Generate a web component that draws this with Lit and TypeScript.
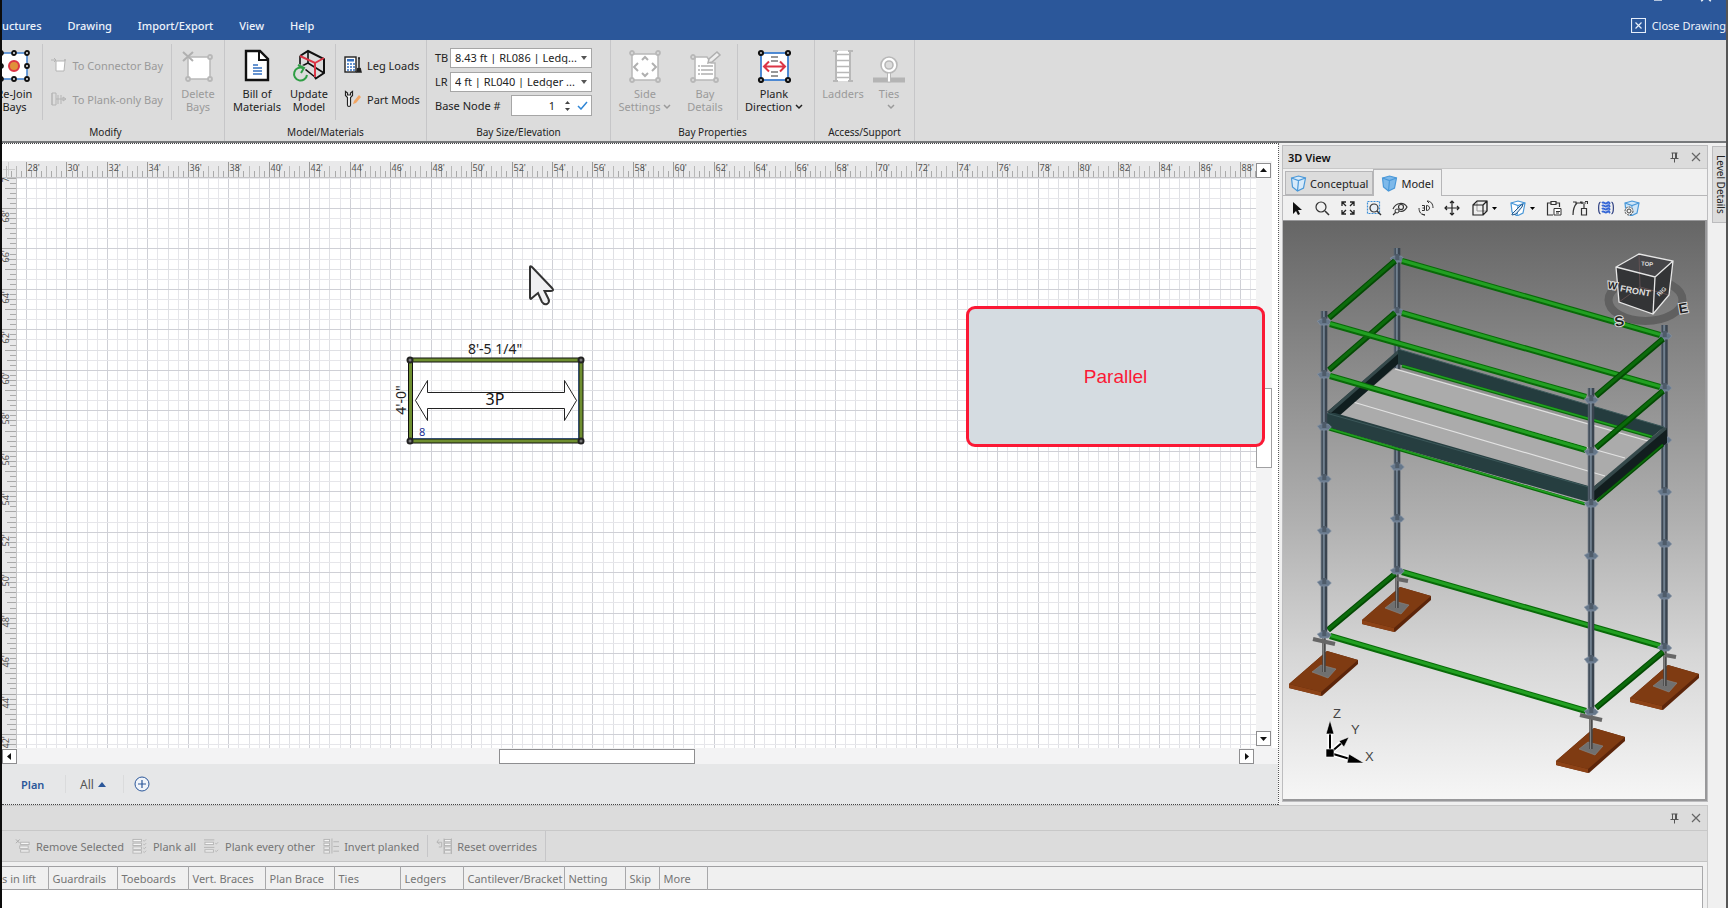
import { LitElement, html, svg, css } from "lit";
import { customElement, state } from "lit/decorators.js";

/* ---------- ribbon icons ---------- */
const node = (x: number, y: number, c = "#111") =>
  svg`<circle cx=${x} cy=${y} r="2" fill="#dcdcdc" stroke=${c} stroke-width="1.8"/>`;

const icons: Record<string, unknown> = {
  rejoin: html`<svg width="32" height="34" viewBox="0 0 32 34"><rect x="3" y="4" width="26" height="26" fill="#fff" stroke="#3d7fd0" stroke-width="1.5"/>
    ${[3, 16, 29].map((x) => [4, 17, 30].map((y) => node(x, y)))}
    <circle cx="16" cy="17" r="5" fill="#e0913a" stroke="#dc3545" stroke-width="2"/></svg>`,
  connector: html`<svg width="16" height="16" viewBox="0 0 16 16"><path d="M5 4h9l-1 10H5z" fill="#fff" stroke="#b4b4b4"/><path d="M0 3h5M3 1l2 2-2 2" fill="none" stroke="#b4b4b4"/><circle cx="14" cy="3" r="1" fill="#b4b4b4"/></svg>`,
  plankonly: html`<svg width="16" height="16" viewBox="0 0 16 16"><path d="M1 2h4v12H1zM1 2v12" fill="none" stroke="#b4b4b4"/><path d="M7 4v9M10 4v9M5 8h9M12 6l3 2-3 2z" fill="none" stroke="#b4b4b4"/></svg>`,
  del: html`<svg width="32" height="34" viewBox="0 0 32 34"><rect x="6" y="8" width="22" height="22" fill="#fff" stroke="#b8b8b8" stroke-width="1.5"/>
    ${node(28, 8, "#b8b8b8")}${node(28, 30, "#b8b8b8")}${node(6, 30, "#b8b8b8")}<path d="M1 3l10 9M11 3L1 12" stroke="#b0b0b0" stroke-width="2"/></svg>`,
  bom: html`<svg width="26" height="34" viewBox="0 0 26 34"><path d="M2 2h14l8 8v21H2z" fill="#fff" stroke="#111" stroke-width="2.4"/><path d="M15 2v9h9" fill="none" stroke="#111" stroke-width="2"/><path d="M9 16h5M9 19h9M9 22h9M9 25h9" stroke="#3470c0" stroke-width="1.6"/></svg>`,
  update: html`<svg width="34" height="34" viewBox="0 0 34 34"><path d="M8 7l8-5 16 8v14l-9 6" fill="none" stroke="#111" stroke-width="2"/><path d="M8 7v9l15 12M16 2v12l-8 4M16 14l16 10M23 14v15" fill="none" stroke="#111" stroke-width="1.6"/><path d="M8 7l15 7 9-5M23 14v14" fill="none" stroke="#dc3545" stroke-width="2"/>
    <path d="M11 19a6.500 6.500 0 1 0 4 7M6 17l6 2-3 6" fill="none" stroke="#dcdcdc" stroke-width="4"/><path d="M11 19a6.500 6.500 0 1 0 4 7M6 16l6 3-3 5" fill="none" stroke="#2f9e44" stroke-width="2"/></svg>`,
  legloads: html`<svg width="18" height="18" viewBox="0 0 18 18"><rect x="1" y="1" width="11" height="15" fill="#fff" stroke="#222" stroke-width="1.400"/><rect x="3" y="3" width="7" height="2.500" fill="#3470c0"/><path d="M3 8h2M6 8h2M9 8h2M3 11h2M6 11h2M9 11h2M3 14h2M6 14h2M9 14h2" stroke="#3470c0" stroke-width="1.600"/><path d="M15 2v10M14 2h2M14 12l-1 4h4l-1-4" stroke="#222" stroke-width="1.500" fill="#222"/></svg>`,
  partmods: html`<svg width="18" height="18" viewBox="0 0 18 18"><path d="M1.500 1.500v4l2 2v7.500a1.500 1.500 0 0 0 3 0V7.500l2-2v-4L6.500 3v2h-3V3z" fill="#fff" stroke="#222" stroke-width="1.200"/><path d="M9 14l1-3 5-6 2 2-5 6z" fill="#f3a562"/></svg>`,
  side: html`<svg width="34" height="34" viewBox="0 0 34 34"><rect x="4" y="5" width="26" height="26" fill="#fff" stroke="#b8b8b8" stroke-width="1.500"/>${[4, 30].map((x) => [4, 31].map((y) => node(x, y, "#b8b8b8")))}
    <path d="M14 11l3-3 3 3M14 24l3 3 3-3M10 14l-4 4 4 4M24 14l4 4-4 4" fill="none" stroke="#b0b0b0" stroke-width="2"/></svg>`,
  details: html`<svg width="34" height="34" viewBox="0 0 34 34"><path d="M7 8h12l4 6h4v17H7z" fill="#fff" stroke="#b8b8b8" stroke-width="1.500"/>${node(5, 8, "#b8b8b8")}${node(5, 31, "#b8b8b8")}${node(28, 31, "#b8b8b8")}
    <path d="M10 17h2M10 21h2M10 25h2M13 17h12M13 21h12M13 25h12" stroke="#b0b0b0" stroke-width="1.600"/><path d="M20 14l1-4 8-7 3 3-8 7z" fill="#eee" stroke="#b0b0b0" stroke-width="1.500"/></svg>`,
  plankdir: html`<svg width="34" height="34" viewBox="0 0 34 34"><rect x="4" y="4" width="27" height="27" fill="#fff" stroke="#3d7fd0" stroke-width="1.800"/>${[4, 31].map((x) => [4, 31].map((y) => svg`<circle cx=${x} cy=${y} r="2" fill="#ddd" stroke="#111" stroke-width="2.200"/>`))}
    <path d="M14 8h7M14 12h7M14 23h7M14 27h7" stroke="#777" stroke-width="1.400"/><path d="M7 17.500h21M12 12.500l-5 5 5 5M23 12.500l5 5-5 5" fill="none" stroke="#dc3545" stroke-width="2"/></svg>`,
  ladders: html`<svg width="24" height="34" viewBox="0 0 24 34"><path d="M5 2h14v30H5z" fill="#fff"/><path d="M2 2h5M17 2h5M2 32h5M17 32h5M5 2v30M19 2v30" fill="none" stroke="#b8b8b8" stroke-width="2"/><path d="M5 5.500h14M5 11.500h14M5 17.500h14M5 23.500h14M5 28.500h14" stroke="#b8b8b8" stroke-width="1.600"/></svg>`,
  ties: html`<svg width="34" height="34" viewBox="0 0 34 34"><path d="M1 28.500h32v5H1z" fill="#b4b4b4"/><circle cx="17" cy="16" r="8" fill="#fff" stroke="#b8b8b8" stroke-width="1.600"/><circle cx="17" cy="16" r="4" fill="#dcdcdc" stroke="#b8b8b8" stroke-width="1.600"/><path d="M15.500 24h3v9h-3z" fill="#fff" stroke="#b8b8b8"/></svg>`,
};

const chev = html`<svg class="chev" width="8" height="6" viewBox="0 0 8 6"><path d="M1 1l3 3 3-3" fill="none" stroke="currentColor" stroke-width="1.500"/></svg>`;
const pin = html`<svg width="9" height="11" viewBox="0 0 9 11"><path d="M1.500 1h6M2.500 1v5M5.500 1v5M6.500 1v5M0.500 6.500h8M4.500 6.500v4" fill="none" stroke="#555" /></svg>`;
const cross = html`<svg width="10" height="10" viewBox="0 0 10 10"><path d="M1 1l8 8M9 1L1 9" stroke="#666" stroke-width="1.200"/></svg>`;

/* ---------- lift toolbar icons ---------- */
const lines = (x: number, w: number, ys: number[]) => ys.map((y) => svg`<rect x=${x} y=${y} width=${w} height="2.500" fill="#f6f6f6" stroke="#b4b4b4"/>`);
const liftIcons = [
  html`<svg width="16" height="16" viewBox="0 0 17 16"><path d="M1 1l4 4M5 1L1 5" stroke="#aaa"/>${lines(6, 9, [4, 12])}${lines(5, 9, [8])}</svg>`,
  html`<svg width="16" height="16" viewBox="0 0 17 16">${lines(1, 9, [1, 5, 9, 13])}<path d="M12 2l1 1 2-2M12 6l1 1 2-2M12 10l1 1 2-2M12 14l1 1 2-2" fill="none" stroke="#b4b4b4"/></svg>`,
  html`<svg width="16" height="16" viewBox="0 0 17 16">${lines(1, 9, [4, 12])}<path d="M0 1.500h11M0 9.500h11M12 5l1 1 2-2M12 13l1 1 2-2" fill="none" stroke="#b4b4b4"/></svg>`,
  html`<svg width="16" height="16" viewBox="0 0 17 16">${lines(1, 6, [1, 5, 9, 13])}<path d="M9.500 0v16M11 3.500h6M11 8.500h6M11 13.500h6" stroke="#b4b4b4"/></svg>`,
  html`<svg width="16" height="17" viewBox="0 0 17 17">${lines(9, 7, [1, 5, 9, 13])}<path d="M8.500 0v16.500M16.500 0v16.500M3 1L1 4l3 2M1 4h5v5H3" fill="none" stroke="#b4b4b4"/></svg>`,
];

/* ---------- 3D toolbar icons ---------- */
const cube = (fill: string) => svg`<path d="M1 3l7-2 7 2-2 10-6 3-5-4z" fill=${fill} stroke="#4a98d8" stroke-width="1.200"/><path d="M1 3l7 2.500L15 3M8 5.500L7 16" fill="none" stroke="#4a98d8" stroke-width="1.200"/>`;
const viewIcons: { label: string; drop?: boolean; art: unknown }[] = [
  { label: "Select", art: svg`<path d="M5 2v12l3-3 2 4 2-1-2-4h4z" fill="#111"/>` },
  { label: "Zoom", art: svg`<circle cx="7" cy="7" r="5" fill="none" stroke="#333" stroke-width="1.200"/><path d="M11 11l4 4" stroke="#333" stroke-width="1.600"/>` },
  { label: "Zoom extents", art: svg`<path d="M2 6V2h4M10 2h4v4M14 10v4h-4M6 14H2v-4M2 2l4 4M14 2l-4 4M14 14l-4-4M2 14l4-4" fill="none" stroke="#222" stroke-width="1.300"/>` },
  { label: "Zoom window", art: svg`<rect x="1.500" y="1.500" width="12" height="12" fill="none" stroke="#3d8fd8" stroke-width="1.200" stroke-dasharray="2 1"/><circle cx="8" cy="8" r="4" fill="#e8eef4" stroke="#333" stroke-width="1.200"/><path d="M11 11l4 4" stroke="#333" stroke-width="1.400"/>` },
  { label: "Look around", art: svg`<path d="M1 9c3-7 11-7 14-2-2 4-5 5-8 4" fill="none" stroke="#333" stroke-width="1.200"/><circle cx="9" cy="7" r="2.500" fill="none" stroke="#333" stroke-width="1.200"/><circle cx="5" cy="11" r="2" fill="#f0f0f0" stroke="#333"/><path d="M4 12l-3 3" stroke="#333" stroke-width="1.200"/>` },
  { label: "Orbit", art: svg`<path d="M4 5.500h2.500v5H4M4.500 8h2M8.500 5.500v5c4 0 4-5 0-5z" fill="none" stroke="#333"/><path d="M9 1c4 0 6 3 6 7M7 15c-4 0-6-3-6-7M9 1l2 2M7 15l-3-1" fill="none" stroke="#333"/>` },
  { label: "Pan", art: svg`<path d="M8 1v14M1 8h14M6 3l2-2 2 2M6 13l2 2 2-2M3 6L1 8l2 2M13 6l2 2-2 2" fill="none" stroke="#222" stroke-width="1.200"/>` },
  { label: "View direction", drop: true, art: svg`<path d="M5 1h10v10H5z" fill="none" stroke="#999"/><path d="M1 5h10v10H1zM1 5l4-4h10v10l-4 4M11 5l4-4" fill="none" stroke="#222" stroke-width="1.200"/>` },
  { label: "Visual style", drop: true, art: svg`${cube("#fff")}<path d="M2 14l9-9 2-1-1 3-6 7-4 1z" fill="#dbeaf7" stroke="#23598c"/>` },
  { label: "Paste view", art: svg`<path d="M5 3H1.500v12H7M10 3h3.500v4M5 1.500h5v3H5z" fill="none" stroke="#333" stroke-width="1.200"/><path d="M8 8.500h7v6.500H8zM10 11.500h4M10 13h3" fill="#fff" stroke="#333"/>` },
  { label: "Edit path", art: svg`<path d="M1 15c0-6 2-10 4-12h9M1 2h3v3M8 2h2v2M13 1.500h2.500V4M9.500 8.500h5V15h-5zM12 4v4" fill="none" stroke="#333" stroke-width="1.200"/>` },
  { label: "Hatch", art: svg`<path d="M2.500 2C0 3 0 13 2.500 14M13.500 2C16 3 16 13 13.500 14" fill="none" stroke="#2d3f80" stroke-width="1.200"/><path d="M4 3c2-2 3 2 5 0s2 0 3 1M4 6c2-2 3 2 5 0s2 0 3 1M4 9c2-2 3 2 5 0s2 0 3 1M4 12c2-2 3 2 5 0s2 0 3 1" fill="none" stroke="#3567d6" stroke-width="2"/>` },
  { label: "Model settings", art: svg`${cube("#cfe6f8")}<circle cx="5" cy="11" r="4" fill="#f0f0f0" stroke="#444" stroke-dasharray="2 1"/><circle cx="5" cy="11" r="2" fill="none" stroke="#444"/>` },
];

/* ---------- plan geometry ---------- */
const FT = 20.23;
const X28 = 26;
const Y68 = 208;
const range = (from: number, to: number) => Array.from({ length: Math.max(0, to - from + 1) }, (_, i) => from + i);
const xAt = (ft: number) => Math.round(X28 + ft * FT) + 0.5;
const yAt = (ft: number) => Math.round(Y68 + ft * FT) + 0.5;

const rulerTop = (feet: number[]) => svg`<g transform="translate(-2 -161)">
  <path d="M8.500 162v14M3 169.500h12" stroke="#ccc"/>
  ${feet.map((f) => svg`
    <path d=${`M${xAt(f)} ${f % 2 ? 166 : 162}V177M${xAt(f + 0.5)} 166V177`} stroke=${f % 2 ? "#b8b8b8" : "#9a9a9a"}/>
    <path d=${`M${xAt(f + 0.25)} 171V177M${xAt(f + 0.75)} 171V177`} stroke="#aaa"/>
    ${f % 2 === 0 ? svg`<text x=${xAt(f) + 1} y="171" class="tick">${28 + f}'</text>` : null}`)}
</g>`;

const rulerLeft = (feet: number[]) => svg`<g transform="translate(-2 -178)">
  ${feet.map((f) => svg`
    <path d=${`M${f % 2 ? 5 : 2} ${yAt(f)}H16M7 ${yAt(f + 0.5)}H16`} stroke="#a8a8a8"/>
    <path d=${`M10 ${yAt(f + 0.25)}H16M10 ${yAt(f + 0.75)}H16`} stroke="#aaa"/>
    ${f % 2 === 0 ? svg`<text transform=${`translate(9 ${yAt(f) + 14}) rotate(-90)`} class="tick">${68 - f}'</text>` : null}`)}
</g>`;

const grid = (fx: number[], fy: number[]) => svg`
  ${fx.map((f) => svg`<path d=${`M${xAt(f)} 178V2000`} stroke=${f % 2 ? "#dfe0e4" : "#cfd0d6"}/><path d=${`M${xAt(f + 0.5)} 178V2000`} stroke="#e6e6ea"/>`)}
  ${fy.map((f) => svg`<path d=${`M17 ${yAt(f)}H4000`} stroke=${f % 2 ? "#dfe0e4" : "#cfd0d6"}/><path d=${`M17 ${yAt(f + 0.5)}H4000`} stroke="#e6e6ea"/>`)}`;

const bay = () => svg`
  <path d="M410 360H581V441H410z" fill="#fff" fill-opacity=".35"/>
  <path d="M578.500 363V438.500H413" fill="none" stroke="#5b8fd6"/>
  <path d="M410.500 360V441M581 360V441M410 360H581M410 441H581" stroke="#111" stroke-width="5"/>
  <path d="M410.500 360V441M581 360V441M410 360H581M410 441H581" stroke="#6f8f30" stroke-width="3"/>
  ${[410, 581].map((x) => [360, 441].map((y) => svg`<circle cx=${x} cy=${y} r="3.500" fill="#222"/><circle cx=${x} cy=${y} r="1.500" fill="#777"/>`))}
  <path d="M415.500 400.500L427.500 380.500V392.500H564.500V380.500L576.500 400.500L564.500 420.500V408.500H427.500V420.500z" fill="#fff" stroke="#222"/>
  <text x="495" y="354" text-anchor="middle" class="dim">8'-5 1/4"</text>
  <text transform="translate(406 400) rotate(-90)" text-anchor="middle" class="dim">4'-0"</text>
  <text x="495" y="405" text-anchor="middle" class="plank">3P</text>
  <text x="419" y="436" class="level">8</text>
  <path d="M530 267V297.500Q530 300 532 298L538 293L542 302Q544 305 547 304Q550 302 548.500 299L544.500 291H551Q554.500 291 552 288L532 267Q530 265.500 530 267z" fill="#f0f0f2" stroke="#333" stroke-width="2"/>`;

/* ---------- 3D scene geometry ---------- */
const beam = (x1: number, y1: number, x2: number, y2: number, side = false, w = 6) => svg`
  <path d=${`M${x1} ${y1}L${x2} ${y2}`} stroke=${side ? "#034a03" : "#086a08"} stroke-width=${w}/>
  <path d=${`M${x1} ${y1 - 0.5}L${x2} ${y2 - 0.5}`} stroke=${side ? "#0b6b0b" : "#22a022"} stroke-width=${w / 2}/>`;

const post = (x: number, top: number, bottom: number, discs: number[]) => svg`
  <rect x=${x - 3} y=${top} width="6" height=${bottom - top} fill="#3a444f"/>
  <rect x=${x - 1.5} y=${top} width="2" height=${bottom - top} fill="#71808f"/>
  <path d=${`M${x - 3} ${top}V${bottom}`} stroke="#56626e"/>
  ${discs.map((y) => svg`<path d=${`M${x - 7} ${y - 1}L${x - 3} ${y - 3}H${x + 4}L${x + 7} ${y}L${x + 4} ${y + 3}H${x - 4}z`} fill="#66778a" stroke="#8594a6" stroke-width=".7"/><rect x=${x - 2} y=${y - 5} width="4" height="6" fill="#4e5b69"/>`)}`;

const foot = (x: number, y: number, top: number, behind = false) => svg`
  <path d=${`M${x + 3} ${y - 21}L${x + 34} ${y - 12}V${y - 8}L${x - 2} ${y + 24}L${x - 35} ${y + 16}V${y + 12}z`} fill="#5c250a"/>
  <path d=${`M${x + 3} ${y - 21}L${x + 34} ${y - 12}L${x - 3} ${y + 20}L${x - 35} ${y + 12}z`} fill="#7f3b12"/>
  <path d=${`M${x - 35} ${y + 12}L${x - 3} ${y + 20}V${y + 24}L${x - 35} ${y + 16}z`} fill="#8c4216"/>
  <path d=${`M${x - 12} ${y}L${x - 3} ${y - 7}L${x + 12} ${y - 3}L${x + 4} ${y + 6}z`} fill="#707070" stroke="#888" stroke-width=".6"/>
  <path d=${`M${x} ${y}V${top}`} stroke="#444" stroke-width="3.400"/><path d=${`M${x - 0.4} ${y}V${top}`} stroke="#888"/>
  <path d=${`M${behind ? x : x - 11} ${behind ? top + 5 : top + 2}L${x + 11} ${top + 7}`} stroke="#666" stroke-width="4"/>`;

const scene = () => svg`
  ${foot(1397, 608, 574, true)}${foot(1665, 686, 650, true)}${foot(1324, 672, 637)}
  ${beam(1402, 572, 1660, 646)}${beam(1395, 574, 1328, 630, true)}
  ${post(1397.300, 248, 574, [259, 312, 467, 519, 571])}
  ${post(1664.700, 325, 650, [336, 388, 440, 492, 544, 596, 648])}
  ${beam(1402, 261, 1660, 335)}${beam(1402, 313, 1660, 387)}
  ${beam(1395, 261, 1329, 318, true)}${beam(1395, 313, 1329, 370, true)}
  <path d="M1395 368L1648 440L1592 489L1336 417z" fill="#ababab"/>
  <path d="M1395 369L1648 441M1353 402L1605 476M1373 388L1625 458" stroke="#e2e2e2" stroke-width="1.200"/>
  <path d="M1398 349L1664 427L1652 437L1398 364z" fill="#243c3e"/>
  <path d="M1398 349L1664 427" stroke="#3c585a"/>
  ${beam(1402, 366, 1652, 437, false, 3)}
  <path d="M1327 412L1398 351V364L1338 417z" fill="#101e1f"/><path d="M1327 412L1398 350V354L1331 413z" fill="#35494b"/>
  <path d="M1592 488L1667 428V443L1592 503z" fill="#121e1f"/><path d="M1592 488L1664 427L1667 429L1594 491z" fill="#35494b"/>
  <path d="M1326 413L1335 413L1592 487V503L1326 427z" fill="#263e40"/><path d="M1326 413L1592 488" stroke="#3c585a"/>
  ${beam(1329, 429, 1585, 504, false, 3)}${beam(1663, 445, 1597, 501, true, 3)}
  ${beam(1663, 652, 1596, 708, true)}
  ${beam(1330, 636, 1586, 711)}
  ${foot(1591, 749, 713)}
  ${post(1324.300, 311, 638, [322, 375, 427, 479, 531, 583, 635])}
  ${beam(1330, 324, 1586, 397)}${beam(1330, 376, 1586, 450)}
  ${beam(1663, 339, 1596, 396, true)}${beam(1663, 391, 1596, 448, true)}
  ${post(1591.300, 388, 713, [400, 452, 504, 556, 608, 660, 712])}
  <ellipse cx="1645.500" cy="300" rx="37" ry="21" fill="none" stroke="#606060" stroke-width="8"/>
  <path d="M1616 267L1639 254L1673 261L1669 295L1653 314L1619 302z" fill="#333436"/>
  <path d="M1616 267L1639 254L1673 261L1655 277z" fill="#454548"/>
  <path d="M1639 254L1640 287M1640 287L1619 302M1640 287L1669 295" stroke="#6b5557" stroke-width=".8"/>
  <path d="M1616 267L1639 254L1673 261L1669 295L1653 314L1619 302zM1616 267L1655 277L1673 261M1655 277L1653 314" fill="none" stroke="#e6e6e6" stroke-width="1.300"/>
  <text class="face" transform="translate(1635 294) rotate(10)" text-anchor="middle">FRONT</text>
  <text class="face small" transform="translate(1647 266) rotate(4)" text-anchor="middle">TOP</text>
  <text class="face small" transform="translate(1663 293) rotate(-45)" text-anchor="middle">RIG</text>
  <text class="compass" transform="translate(1620 326) rotate(-10)" text-anchor="middle">S</text>
  <text class="compass" transform="translate(1684 313) rotate(-10)" text-anchor="middle">E</text>
  <text class="compass small" transform="translate(1612 289) rotate(10)" text-anchor="middle">W</text>
  <path d="M1330 753V730M1330 753L1342 742M1330 753L1350 759" stroke="#fff" stroke-width="5"/>
  <path d="M1330 753V730M1330 753L1344 741M1330 753L1350 759" stroke="#000" stroke-width="2"/>
  <path d="M1326 749h8v8h-8zM1330 720L1334 734H1326zM1349 754L1364 763L1347 763zM1349 737L1344 747L1339 741z" stroke="#fff" stroke-width=".6"/>
  <g class="axis"><text x="1333" y="718">Z</text><text x="1351" y="734">Y</text><text x="1365" y="761">X</text></g>`;

@customElement("app-root")
export class AppRoot extends LitElement {
  static styles = css`
    :host { display: block; font: 11px/13px "Noto Sans", "Open Sans", sans-serif; color: #222; }
    * { box-sizing: border-box; }
    button { font: inherit; color: inherit; background: none; border: 0; padding: 0; margin: 0; }
    svg { display: block; flex: none; }
    .app { display: flex; flex-direction: column; height: 100vh; min-height: 600px; overflow: hidden; background: #f0f0f0; border-left: 2px solid #0c0c0c; border-right: 2px solid #555; }
    .title { flex: none; height: 40px; background: #2b579a; color: #eef3fa; display: flex; align-items: flex-end; justify-content: space-between; position: relative; overflow: hidden; }
    .title button { height: 29px; white-space: nowrap; }
    .menu { display: flex; gap: 26px; font-weight: 500; }
    .closer { display: flex; align-items: center; gap: 6px; }
    .caption { position: absolute; right: 14px; top: 0; }

    .ribbon { flex: none; height: 103px; display: flex; background: #dcdcdc; border-bottom: 2px solid #77797b; overflow: hidden; }
    .group { display: flex; flex-direction: column; flex: none; border-right: 1px solid #c6c6c8; }
    .body { flex: 1; display: flex; padding-top: 4px; }
    .caption-text { text-align: center; font-size: 10px; line-height: 18px; height: 18px; color: #222; }
    .g1 { width: 238px; margin-left: -15px; } .g1 .body { justify-content: flex-end; }
    .g2 { width: 202px; } .g3 { width: 184px; } .g4 { width: 204px; } .g5 { width: 100px; }
    .g2 .rule, .g4 .rule { margin-left: 6px; }
    .big { display: flex; flex-direction: column; align-items: center; gap: 4px; padding-top: 5px; flex: none; white-space: nowrap; text-align: center; }
    .off { color: #9a9a9a; }
    .w36 { width: 36px; } .w40 { width: 40px; } .w52 { width: 52px; } .w56 { width: 56px; } .w64 { width: 64px; } .w68 { width: 68px; } .w72 { width: 72px; }
    .big .chev { display: inline-block; margin-left: 3px; vertical-align: 1px; }
    .rule { flex: none; width: 1px; height: 76px; background: #c6c6c8; }
    .pair { display: flex; flex-direction: column; gap: 16px; padding: 12px 8px 0; white-space: nowrap; }
    .pair button { display: flex; align-items: center; gap: 5px; height: 18px; }
    .sizes { display: flex; flex-direction: column; gap: 3px; padding: 3px 18px 0 8px; flex: 1; }
    .sizes .row { display: flex; align-items: center; height: 21px; white-space: nowrap; }
    .sizes .row label { flex: 1; }
    .combo { position: relative; width: 142px; height: 20px; }
    .combo select, .num { appearance: none; width: 100%; height: 100%; border: 1px solid #a6a6a6; border-radius: 0; background: #fff; font: inherit; color: #222; padding: 0 4px; margin: 0; }
    .combo svg { position: absolute; right: 5px; top: 8px; pointer-events: none; }
    .numbox { display: flex; align-items: center; width: 81px; height: 21px; border: 1px solid #a6a6a6; background: #fff; padding-right: 3px; gap: 7px; }
    .numbox .num { flex: 1; min-width: 0; border: 0; text-align: right; padding: 0; margin-right: 3px; appearance: textfield; }
    .num::-webkit-inner-spin-button { appearance: none; }
    .spin { display: flex; flex-direction: column; gap: 4px; }

    .work { flex: 1; min-height: 0; display: flex; }
    .plan { flex: 1; min-width: 0; display: flex; flex-direction: column; position: relative; border-right: 1px dotted #555; background: #fff; border-top: 1px dotted #444; }
    .gap { flex: none; height: 17px; }
    .board { flex: 1; min-height: 0; display: grid; grid-template-columns: 15px 1fr 22px; grid-template-rows: 17px 1fr 16px; }
    .rtop { grid-column: 1 / 3; background: #e9e9ea; border-bottom: 1px solid #c4c4c6; }
    .rleft { background: #e9e9ea; border-right: 1px solid #c4c4c6; }
    .board svg.fill { width: 100%; height: 100%; overflow: hidden; }
    .cell { overflow: hidden; min-width: 0; min-height: 0; }
    .vbar { grid-column: 3; grid-row: 1 / 3; display: flex; flex-direction: column; width: 16px; background: #f3f3f4; padding: 2px 0; }
    .hbar { grid-column: 1 / 4; display: flex; background: #f3f3f4; padding: 1px 24px 0 0; height: 16px; }
    .hbar button, .vbar button { display: grid; place-items: center; background: #fff; border: 1px solid #8e8e90; width: 15px; height: 15px; flex: none; }
    .track { flex: 1; display: flex; }
    .vbar .track { flex-direction: column; }
    .hbar .track::before { content: ""; flex: 483; } .hbar .track::after { content: ""; flex: 545; }
    .vbar .track::before { content: ""; flex: 211; } .vbar .track::after { content: ""; flex: 264; }
    .hthumb { flex: 194; border: 1px solid #8e8e90; background: #fff; height: 15px; }
    .vthumb { flex: 78; border: 1px solid #a0a0a2; background: #fff; width: 16px; }
    .tick { font-size: 9px; fill: #555; }
    .dim { font-size: 14px; fill: #222; } .plank { font-size: 16px; fill: #111; } .level { font-size: 11px; fill: #1b2f96; }
    .callout { position: absolute; right: 13px; top: 162px; width: 299px; height: 141px; border: 3px solid #fb1935; border-radius: 9px; background: #d5dce1; display: grid; place-items: center; font: 19px/22px "Liberation Sans", sans-serif; color: #fb1935; }
    .sheets { flex: none; height: 41px; background: #e6e7e8; display: flex; align-items: center; border-bottom: 1px dotted #444; padding-left: 19px; }
    .sheets button { display: flex; align-items: center; gap: 4px; height: 18px; }
    .sheets .plan-tab { color: #2b579a; font-weight: 600; width: 45px; border-right: 1px solid #dadbdc; }
    .sheets .all { width: 58px; padding-left: 14px; border-right: 1px solid #dadbdc; color: #555; font-size: 12px; }
    .sheets .add { margin-left: 10px; }

    .view { flex: none; width: 426px; margin: 2px 0 3px 3px; border: 1px solid #bdbdbf; display: flex; flex-direction: column; background: #f0f0f0; }
    .bar { flex: none; display: flex; align-items: center; justify-content: flex-end; gap: 12px; padding-right: 6px; height: 23px; background: #dcdcdc; border-bottom: 1px solid #c8c8c8; }
    .lift .bar { height: 25px; }
    .bar h2 { flex: 1; margin: 0; padding-left: 5px; font-size: 11px; font-weight: 600; color: #111; }
    .tabs { flex: none; height: 27px; display: flex; align-items: flex-end; padding-left: 2px; border-bottom: 1px solid #b6b6b8; }
    .tabs button { display: flex; align-items: center; border: 1px solid #b6b6b8; height: 24px; background: #dcdcdc; padding: 0 4px; gap: 3px; white-space: nowrap; }
    .tabs button.on { height: 27px; margin-bottom: -1px; background: #f0f0f0; border-bottom: 0; padding: 0 7px; }
    .tools { flex: none; height: 24px; display: flex; align-items: center; }
    .tools button { width: 26px; height: 24px; display: flex; align-items: center; justify-content: center; gap: 4px; }
    .tools button.drop { width: 38px; }
    .stage { flex: 1; min-height: 0; border: solid #98989a; border-width: 1px 2px 2px 0; background: linear-gradient(#666, #b0b0b0 52%, #d6d6d6 75%, #f6f6f6); }
    .stage svg { width: 100%; height: 100%; }
    .face { font: 700 9px "Liberation Sans", sans-serif; fill: #ddd; } .face.small { font-size: 6px; }
    .compass { font: 700 14px "Liberation Sans", sans-serif; fill: #222; stroke: #ddd; stroke-width: 2px; paint-order: stroke; } .compass.small { font-size: 10px; }
    .axis { font: 13px "Liberation Sans", sans-serif; fill: #444; }
    .side { flex: none; width: 18px; padding: 3px 0 0 4px; overflow: hidden; }
    .side button { writing-mode: vertical-rl; height: 77px; width: 18px; line-height: 16px; background: #dcdcdc; border: 1px solid #bcbcbe; font-size: 10px; white-space: nowrap; }

    .lift { flex: none; height: 103px; display: flex; flex-direction: column; margin-right: 18px; border: solid #c8c8c8; border-width: 1px 1px 0 0; background: #f0f0f0; }
    .lift-tools { flex: none; height: 31px; background: #dcdcdc; border-bottom: 1px solid #c4c4c4; display: flex; align-items: center; padding-left: 13px; gap: 8px; color: #757575; }
    .lift-tools button { display: flex; align-items: center; gap: 5px; white-space: nowrap; }
    .lift-tools .rule { height: 22px; } .lift-tools .end { height: 31px; }
    .sheet { flex: 1; margin: 4px 4px 0 0; background: #fff; border-right: 1px solid #a8a8aa; overflow: hidden; }
    table { width: 100%; border-collapse: collapse; table-layout: fixed; border: solid #a0a0a2; border-width: 1px 0; }
    th { height: 23px; padding: 0 0 0 4px; text-align: left; font-weight: 400; background: #f0f0f0; border-right: 1px solid #a8a8aa; color: #757575; white-space: nowrap; overflow: hidden; }
    th:first-child { padding: 0; } th:last-child { border-right: 0; }
    .c46 { width: 46px; } .c69 { width: 69px; } .c71 { width: 71px; } .c77 { width: 77px; } .c66 { width: 66px; } .c63 { width: 63px; } .c101 { width: 101px; } .c61 { width: 61px; } .c34 { width: 34px; } .c48 { width: 48px; }
  `;

  @state() private winW = window.innerWidth;
  @state() private winH = window.innerHeight;

  private onResize = () => {
    this.winW = window.innerWidth;
    this.winH = window.innerHeight;
  };

  connectedCallback() {
    super.connectedCallback();
    window.addEventListener("resize", this.onResize);
  }

  disconnectedCallback() {
    window.removeEventListener("resize", this.onResize);
    super.disconnectedCallback();
  }

  private big(icon: string, a: string, b: string, w: string, off = false, drop = false) {
    return html`<button class="big ${w} ${off ? "off" : ""}">${icons[icon]}<span>${a}<br />${b}${drop ? chev : null}</span></button>`;
  }

  private small(icon: string, text: string, off = false) {
    return html`<button class=${off ? "off" : ""}>${icons[icon]}${text}</button>`;
  }

  private combo(id: string, label: string, value: string) {
    return html`<div class="row"><label for=${id}>${label}</label><span class="combo"><select id=${id}><option>${value}</option></select>
      <svg width="6" height="4" viewBox="0 0 6 4"><path d="M0 0h6L3 4z" fill="#555" /></svg></span></div>`;
  }

  private arrow(d: string) {
    return html`<svg width="7" height="7" viewBox="0 0 7 7"><path d=${d} fill="#111" /></svg>`;
  }

  render() {
    const fx = range(-1, Math.floor((this.winW - 472 - X28) / FT));
    const fy = range(-2, Math.floor((this.winH - 162 - Y68) / FT));
    const cols: [string, string][] = [["s in lift", "c46"], ["Guardrails", "c69"], ["Toeboards", "c71"], ["Vert. Braces", "c77"], ["Plan Brace", "c69"], ["Ties", "c66"], ["Ledgers", "c63"], ["Cantilever/Bracket", "c101"], ["Netting", "c61"], ["Skip", "c34"], ["More", "c48"], ["", ""]];
    return html`<div class="app">
      <header class="title">
        <nav class="menu">${["uctures", "Drawing", "Import/Export", "View", "Help"].map((t) => html`<button>${t}</button>`)}</nav>
        <svg class="caption" width="60" height="2" viewBox="0 0 60 2"><path d="M2 0h8M51 0l-2 1M57 0l2 1" stroke="#dfe7f2" stroke-width="1.500"/></svg>
        <button class="closer"><svg width="15" height="15" viewBox="0 0 15 15"><path d="M.5.500h14v14H.5zM4.500 4.500l6 6M10.500 4.500l-6 6" fill="none" stroke="#e6eefa" stroke-width="1.200"/></svg>Close Drawing</button>
      </header>

      <section class="ribbon">
        <div class="group g1"><div class="body">
          ${this.big("rejoin", "Re-Join", "Bays", "w56")}<i class="rule"></i>
          <div class="pair">${this.small("connector", "To Connector Bay", true)}${this.small("plankonly", "To Plank-only Bay", true)}</div>
          <i class="rule"></i>${this.big("del", "Delete", "Bays", "w52", true)}
        </div><div class="caption-text">Modify</div></div>
        <div class="group g2"><div class="body">
          ${this.big("bom", "Bill of", "Materials", "w64")}${this.big("update", "Update", "Model", "w40")}<i class="rule"></i>
          <div class="pair">${this.small("legloads", "Leg Loads")}${this.small("partmods", "Part Mods")}</div>
        </div><div class="caption-text">Model/Materials</div></div>
        <div class="group g3"><div class="body"><div class="sizes">
          ${this.combo("tb", "TB", "8.43 ft | RL086 | Ledg...")}${this.combo("lr", "LR", "4 ft | RL040 | Ledger ...")}
          <div class="row"><label for="node">Base Node #</label><span class="numbox"><input id="node" class="num" type="number" value="1" />
            <span class="spin"><svg width="5" height="3" viewBox="0 0 5 3"><path d="M0 3h5L2.500 0z" fill="#444"/></svg><svg width="5" height="3" viewBox="0 0 5 3"><path d="M0 0h5L2.500 3z" fill="#444"/></svg></span>
            <svg width="11" height="9" viewBox="0 0 11 9"><path d="M1 5l3 3 6-7" fill="none" stroke="#2f86d6" stroke-width="1.500"/></svg></span></div>
        </div></div><div class="caption-text">Bay Size/Elevation</div></div>
        <div class="group g4"><div class="body">
          ${this.big("side", "Side", "Settings", "w68", true, true)}${this.big("details", "Bay", "Details", "w52", true)}<i class="rule"></i>
          ${this.big("plankdir", "Plank", "Direction", "w72", false, true)}
        </div><div class="caption-text">Bay Properties</div></div>
        <div class="group g5"><div class="body">
          ${this.big("ladders", "Ladders", "", "w56", true)}${this.big("ties", "Ties", "", "w36", true, true)}
        </div><div class="caption-text">Access/Support</div></div>
      </section>

      <main class="work">
        <section class="plan">
          <div class="gap"></div>
          <div class="board">
            <div class="cell rtop"><svg class="fill">${rulerTop(fx)}</svg></div>
            <div class="cell rleft"><svg class="fill">${rulerLeft(fy)}</svg></div>
            <div class="cell"><svg class="fill"><g transform="translate(-17 -178)">${grid(fx, fy)}${bay()}</g></svg></div>
            <div class="vbar"><button aria-label="Scroll up">${this.arrow("M0 5h7L3.500 1z")}</button><div class="track"><div class="vthumb"></div></div><button aria-label="Scroll down">${this.arrow("M0 2h7L3.500 6z")}</button></div>
            <div class="hbar"><button aria-label="Scroll left">${this.arrow("M5 0v7L1 3.500z")}</button><div class="track"><div class="hthumb"></div></div><button aria-label="Scroll right">${this.arrow("M2 0v7l4-3.500z")}</button></div>
          </div>
          <div class="sheets"><button class="plan-tab">Plan</button><button class="all">All<svg width="8" height="5" viewBox="0 0 8 5"><path d="M0 5L4 0l4 5z" fill="#2b579a"/></svg></button>
            <button class="add" aria-label="Add sheet"><svg width="16" height="16" viewBox="0 0 16 16"><circle cx="8" cy="8" r="7" fill="#f0f4fa" stroke="#2b579a"/><path d="M8 4v8M4 8h8" stroke="#2b579a" stroke-width="1.200"/></svg></button></div>
          <div class="callout">Parallel</div>
        </section>

        <section class="view">
          <div class="bar"><h2>3D View</h2><button aria-label="Pin">${pin}</button><button aria-label="Close">${cross}</button></div>
          <div class="tabs"><button><svg width="17" height="17" viewBox="0 0 16 17">${cube("#d7eafa")}</svg>Conceptual</button><button class="on"><svg width="17" height="17" viewBox="0 0 16 17">${cube("#7db9ea")}</svg>Model</button></div>
          <div class="tools">${viewIcons.map((v) => html`<button class=${v.drop ? "drop" : ""} aria-label=${v.label}><svg width="16" height="16" viewBox="0 0 16 16">${v.art}</svg>${v.drop ? html`<svg width="5" height="3" viewBox="0 0 5 3"><path d="M0 0h5L2.500 3z"/></svg>` : null}</button>`)}</div>
          <div class="stage"><svg viewBox="1283 221 422 578">${scene()}</svg></div>
        </section>
        <aside class="side"><button>Level Details</button></aside>
      </main>

      <section class="lift">
        <div class="bar"><button aria-label="Pin">${pin}</button><button aria-label="Close">${cross}</button></div>
        <div class="lift-tools">
          ${["Remove Selected", "Plank all", "Plank every other", "Invert planked"].map((t, i) => html`<button>${liftIcons[i]}${t}</button>`)}
          <i class="rule"></i><button>${liftIcons[4]}Reset overrides</button><i class="rule end"></i>
        </div>
        <div class="sheet"><table><thead><tr>${cols.map(([t, c]) => html`<th class=${c}>${t}</th>`)}</tr></thead></table></div>
      </section>
    </div>`;
  }
}
